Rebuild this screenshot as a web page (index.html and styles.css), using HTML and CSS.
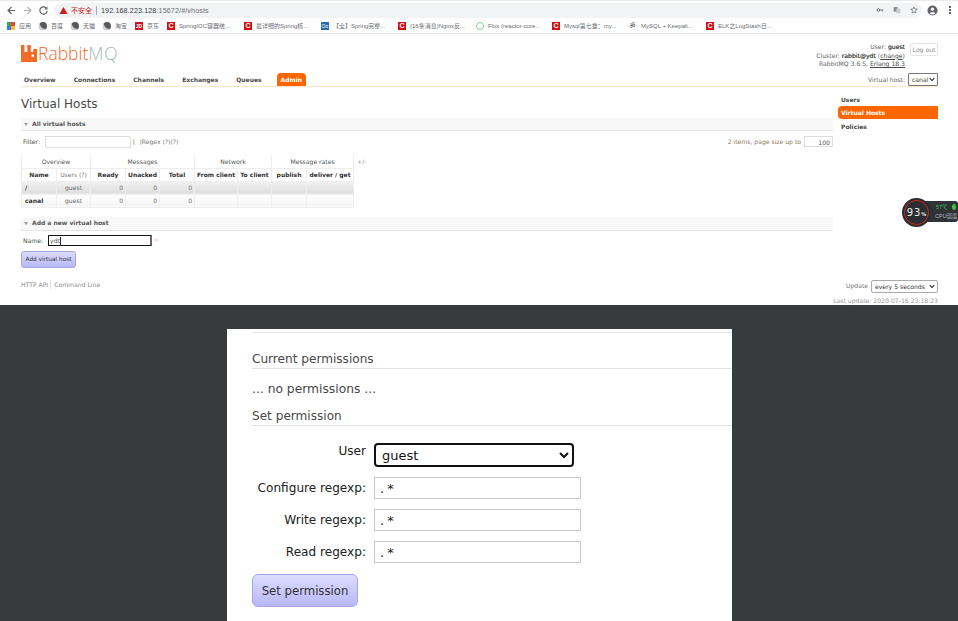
FILE: index.html
```html
<!DOCTYPE html>
<html lang="zh-CN">
<head>
  <meta charset="UTF-8">
  <meta name="viewport" content="width=device-width, initial-scale=1.0">
  <title>RabbitMQ Management</title>
  <link rel="stylesheet" href="styles.css">
</head>
<body>
  <div class="shot-top">
    <div class="toolbar">
      <svg class="tool-ico" viewBox="0 0 12 12"><path d="M10 6H2.5M6 2.2 2.2 6 6 9.8" fill="none" stroke="#5f6368" stroke-width="1.3"/></svg>
      <svg class="tool-ico" viewBox="0 0 12 12"><path d="M2 6h7.5M6 2.2 9.8 6 6 9.8" fill="none" stroke="#b4b7ba" stroke-width="1.3"/></svg>
      <svg class="tool-ico" viewBox="0 0 12 12"><path d="M9.6 4.2A4 4 0 1 0 10 6.5" fill="none" stroke="#5f6368" stroke-width="1.3"/><path d="M10.3 1.6v3.4H6.9z" fill="#5f6368"/></svg>
      <div class="omnibox">
        <svg class="warn-ico" viewBox="0 0 10 10"><path d="M5 1 9.5 9H.5z" fill="#c5221f"/></svg>
        <span class="not-secure">不安全</span>
        <span class="omni-sep"></span>
        <span class="url">192.168.223.128<span class="url-dim">:15672/#/vhosts</span></span>
        <span class="omni-right">
          <svg class="omni-ico" viewBox="0 0 12 12"><circle cx="3.5" cy="6" r="2" fill="none" stroke="#5f6368" stroke-width="1.3"/><path d="M5.5 6H11M9.5 6v2" stroke="#5f6368" stroke-width="1.3"/></svg>
          <svg class="omni-ico" viewBox="0 0 12 12"><rect x="1" y="1.5" width="6" height="7" fill="#8a8d91"/><rect x="5" y="4" width="6" height="7" fill="#c9cbce"/></svg>
          <svg class="omni-ico" viewBox="0 0 12 12"><path d="m6 1.3 1.4 3.2 3.5.3-2.7 2.3.8 3.4-3-1.8-3 1.8.8-3.4L1.1 4.8l3.5-.3z" fill="none" stroke="#5f6368"/></svg>
        </span>
      </div>
      <svg class="avatar" viewBox="0 0 12 12"><circle cx="6" cy="6" r="5.5" fill="#5f6368"/><circle cx="6" cy="4.6" r="1.8" fill="#fff"/><path d="M2.8 9c.8-1.5 5.6-1.5 6.4 0A4.4 4.4 0 0 1 2.8 9z" fill="#fff"/></svg>
      <span class="kebab"><i></i><i></i><i></i></span>
    </div>

    <div class="bookmarks">
      <span class="bm bm-short"><span class="ico ico-apps"></span>应用</span>
      <span class="bm bm-short"><span class="ico ico-globe"></span>百度</span>
      <span class="bm bm-short"><span class="ico ico-globe"></span>天猫</span>
      <span class="bm bm-short"><span class="ico ico-globe"></span>淘宝</span>
      <span class="bm bm-short"><span class="ico ico-jd">JD</span>京东</span>
      <span class="bm bm-long"><span class="ico ico-c">C</span>SpringIOC容器统...</span>
      <span class="bm bm-long"><span class="ico ico-c">C</span>最详细的Spring核...</span>
      <span class="bm bm-long"><span class="ico ico-o">O≡</span>【全】Spring完整...</span>
      <span class="bm bm-c3"><span class="ico ico-c">C</span>(16条消息)Nginx反...</span>
      <span class="bm bm-flux"><span class="ico ico-flux"></span>Flux (reactor-core...</span>
      <span class="bm bm-long"><span class="ico ico-c">C</span>Mysql第七章：my...</span>
      <span class="bm bm-long"><span class="ico ico-ks">ॐ</span>MySQL + Keepali...</span>
      <span class="bm"><span class="ico ico-c">C</span>ELK之LogStash日...</span>
    </div>

    <div class="rmq">
      <header class="rmq-head">
        <div class="logo">
          <svg class="logo-mark" viewBox="0 0 16 17"><path d="M0 0h3.5v7H6.3V0h3.5v7h2.4V4h3.8v13H0z" fill="#f26b28"/><rect x="10.6" y="9.5" width="2.4" height="2.6" fill="#fff"/></svg>
          <span class="logo-rabbit">Rabbit</span><span class="logo-mq">MQ</span><span class="logo-tm">.</span>
        </div>
        <div class="login">
          <div class="login-text">
            <p>User: <b>guest</b></p>
            <p>Cluster: <b>rabbit@ydt</b> (<u>change</u>)</p>
            <p>RabbitMQ 3.6.5, <u>Erlang 18.3</u></p>
          </div>
          <button class="logout">Log out</button>
        </div>
      </header>

      <nav class="tabs">
        <span class="tab">Overview</span>
        <span class="tab">Connections</span>
        <span class="tab">Channels</span>
        <span class="tab">Exchanges</span>
        <span class="tab">Queues</span>
        <span class="tab tab-on">Admin</span>
        <span class="vhost-pick">Virtual host:
          <span class="small-select vhost-select">canal<svg class="chev" viewBox="0 0 8 6"><path d="M1 1.2 4 4.4l3-3.2" fill="none" stroke="#222" stroke-width="1.4"/></svg></span>
        </span>
      </nav>

      <div class="rmq-body">
        <main class="rmq-main">
          <h1>Virtual Hosts</h1>

          <h2 class="section"><span class="arrow"></span>All virtual hosts</h2>
          <div class="filter-row">
            <label class="filter-label">Filter:</label>
            <span class="filter-box"></span>
            <span class="regex">[ &nbsp;]Regex (?)(?)</span>
            <span class="paging"><span class="paging-num">2 items, page size up to</span><span class="page-box">100</span></span>
          </div>

          <table class="vhosts">
            <colgroup>
              <col class="c-name"><col class="c-users"><col class="c-ready"><col class="c-unack"><col class="c-total">
              <col class="c-from"><col class="c-to"><col class="c-pub"><col class="c-del"><col class="c-plus">
            </colgroup>
            <thead>
              <tr class="group-row">
                <th colspan="2">Overview</th>
                <th colspan="3">Messages</th>
                <th colspan="2">Network</th>
                <th colspan="2">Message rates</th>
                <td class="plus">+/-</td>
              </tr>
              <tr class="col-row">
                <th>Name</th>
                <th class="lite">Users (?)</th>
                <th>Ready</th>
                <th>Unacked</th>
                <th>Total</th>
                <th>From client</th>
                <th>To client</th>
                <th>publish</th>
                <th>deliver / get</th>
              </tr>
            </thead>
            <tbody>
              <tr class="odd">
                <td class="name">/</td><td class="mid">guest</td><td class="num">0</td><td class="num">0</td><td class="num">0</td><td></td><td></td><td></td><td></td>
              </tr>
              <tr class="even">
                <td class="name">canal</td><td class="mid">guest</td><td class="num">0</td><td class="num">0</td><td class="num">0</td><td></td><td></td><td></td><td></td>
              </tr>
            </tbody>
          </table>

          <h2 class="section section-add"><span class="arrow"></span>Add a new virtual host</h2>
          <div class="name-row">
            <label class="filter-label">Name:</label>
            <span class="name-input">ydt<i class="caret"></i></span>
            <span class="req">*</span>
          </div>
          <button class="purple-btn add-btn">Add virtual host</button>

          <div class="foot-links"><span class="foot-api">HTTP API</span><span>Command Line</span></div>
        </main>

        <aside class="rmq-side">
          <a class="side-link">Users</a>
          <a class="side-link side-on">Virtual Hosts</a>
          <a class="side-link">Policies</a>
        </aside>
      </div>

      <div class="update-box">
        <div class="update-row">Update
          <span class="small-select update-select">every 5 seconds<svg class="chev" viewBox="0 0 8 6"><path d="M1 1.2 4 4.4l3-3.2" fill="none" stroke="#222" stroke-width="1.4"/></svg></span>
        </div>
        <div class="last-update">Last update: 2020-07-16 23:18:23</div>
      </div>

      <div class="cpu">
        <span class="cpu-tail"><span class="cpu-temp">57℃</span><span class="cpu-leaf"></span><span class="cpu-label">CPU温度</span></span>
        <span class="cpu-ring">93<small>%</small></span>
      </div>
    </div>
  </div>

  <div class="shot-bottom">
    <div class="panel">
      <div class="panel-rule"></div>
      <h3 class="perm-head">Current permissions</h3>
      <p class="perm-none">... no permissions ...</p>
      <h3 class="perm-head perm-set">Set permission</h3>
      <div class="perm-form">
        <label class="perm-label perm-user">User</label>
        <select class="user-select"><option>guest</option></select>
        <label class="perm-label">Configure regexp:</label>
        <span class="regex-input">.*</span>
        <label class="perm-label">Write regexp:</label>
        <span class="regex-input">.*</span>
        <label class="perm-label">Read regexp:</label>
        <span class="regex-input">.*</span>
      </div>
      <button class="purple-btn set-btn">Set permission</button>
    </div>
  </div>
</body>
</html>
```

FILE: styles.css
```css
* { box-sizing: border-box; }
html, body { margin: 0; padding: 0; }
body {
  width: 958px;
  height: 621px;
  overflow: hidden;
  font-family: "DejaVu Sans", Verdana, "Noto Sans CJK SC", sans-serif;
  color: #484848;
  background: #fff;
}
p, h1, h2, h3 { margin: 0; }

.shot-top { height: 305px; display: flex; flex-direction: column; }

/* browser chrome */
.toolbar {
  height: 18px;
  border-top: 1px solid #e9eaec;
  padding: 1px 0 0 6px;
  display: flex;
  align-items: center;
  flex: none;
}
.tool-ico { width: 11px; height: 11px; margin-right: 5px; flex: none; }
.omnibox {
  width: 868px;
  height: 15px;
  background: #f1f3f4;
  border-radius: 8px;
  display: flex;
  align-items: center;
  padding: 0 4px 0 5px;
  font-family: "Liberation Sans", sans-serif;
  font-size: 7.2px;
  flex: none;
}
.warn-ico { width: 9px; height: 9px; flex: none; }
.not-secure { color: #c5221f; margin-left: 3px; font-family: "Noto Sans CJK SC", sans-serif; font-size: 7px; }
.omni-sep { width: 1px; height: 9px; background: #a8abaf; margin: 0 4px; }
.url { color: #3c4043; letter-spacing: 0.1px; }
.url-dim { color: #6d7074; }
.omni-right { margin-left: auto; display: flex; gap: 9px; }
.omni-ico { width: 8px; height: 8px; }
.avatar { width: 11px; height: 11px; margin-left: 5px; flex: none; }
.kebab { display: flex; flex-direction: column; gap: 1px; margin-left: 11px; }
.kebab i { width: 2px; height: 2px; background: #5f6368; display: block; }

.bookmarks {
  height: 16px;
  display: flex;
  align-items: center;
  padding-left: 7px;
  border-bottom: 1px solid #dfe1e4;
  font-family: "Liberation Sans", "Noto Sans CJK SC", sans-serif;
  font-size: 6px;
  color: #6a6d71;
  white-space: nowrap;
  flex: none;
}
.bm { display: flex; align-items: center; }
.bm-short { width: 32px; }
.bm-long { width: 77px; }
.bm-c3 { width: 78px; }
.bm-flux { width: 76px; }
.ico { width: 8px; height: 8px; margin-right: 4px; flex: none; display: block; }
.ico-apps {
  background: conic-gradient(#e8453c 25%, #f9bb2d 0 50%, #3b78e7 0 75%, #34a853 0);
}
.ico-globe { background: #55585c; border-radius: 50%; box-shadow: inset 2px -2px 0 -1px #d8d8d8; }
.ico-jd { background: #c4161c; color: #fff; font-size: 5px; line-height: 8px; text-align: center; font-weight: bold; }
.ico-c { background: #d40f14; color: #fff; font-size: 7px; line-height: 8px; text-align: center; font-weight: bold; }
.ico-o { background: #2a6eb0; color: #fff; font-size: 5px; line-height: 8px; text-align: center; }
.ico-flux { border: 1px solid #8fcf8f; border-radius: 50%; }
.ico-ks { color: #333; font-size: 7px; line-height: 8px; font-family: "DejaVu Sans", sans-serif; }

/* rabbitmq page */
.rmq { position: relative; flex: 1; padding: 0 20px 0 21px; }
.rmq-head { height: 38px; display: flex; justify-content: space-between; }
.logo {
  display: flex;
  align-items: baseline;
  margin-top: 10px;
  height: 18px;
  line-height: 18px;
  font-family: "Open Sans", "Liberation Sans", sans-serif;
  font-weight: 300;
  font-size: 17.5px;
}
.logo-mark { width: 16px; height: 17px; align-self: center; margin-right: 1px; }
.logo-rabbit { color: #f26b28; }
.logo-mq { color: #a9b3b3; letter-spacing: 0.8px; }
.logo-tm { color: #ccd; font-size: 8px; }
.login { display: flex; font-size: 6.1px; color: #666; padding-top: 9px; }
.login-text { text-align: right; line-height: 8.7px; }
.login-text b { color: #484848; font-weight: normal; text-shadow: 0 0 .4px #484848; }
.login-text u { color: #484848; }
.logout {
  width: 28px;
  height: 13px;
  margin-left: 5px;
  padding: 0;
  background: #fff;
  border: 1px solid #e4e4e4;
  border-radius: 2px;
  color: #8d8d8d;
  font: 6.1px "DejaVu Sans", sans-serif;
}
.tabs {
  height: 15px;
  display: flex;
  align-items: center;
  border-bottom: 1px solid #fce4c4;
  font-size: 6px;
  font-weight: bold;
  color: #484848;
  padding: 1px 0 0 3px;
}
.tab { margin-right: 18px; }
.tab-on {
  margin-left: -3px;
  height: 13px;
  line-height: 14px;
  padding: 0 4px;
  background: #f60;
  color: #fff;
  border-radius: 4px 4px 0 0;
  align-self: flex-end;
}
.vhost-pick { margin-left: auto; font-weight: normal; font-size: 6.1px; color: #666; display: flex; align-items: center; gap: 3px; margin-bottom: 1px; }
.small-select {
  display: inline-flex;
  align-items: center;
  justify-content: space-between;
  height: 13px;
  padding: 0 2px 0 3px;
  font-size: 6.1px;
  color: #333;
  background: #fff;
  border: 1px solid #777;
  border-radius: 1px;
}
.chev { width: 6px; height: 5px; flex: none; }
.vhost-select { width: 30px; }

.rmq-body { display: flex; }
.rmq-main { width: 812px; flex: none; }
h1 { font-size: 12px; font-weight: normal; color: #484848; margin-top: 10px; line-height: 14px; }
.section {
  height: 13px;
  margin-top: 7px;
  background: #f8f8f8;
  border-bottom: 1px solid #e4e4e4;
  font-size: 6px;
  line-height: 12px;
  font-weight: bold;
  color: #555;
  display: flex;
  align-items: center;
  padding-left: 3px;
}
.arrow {
  width: 0;
  height: 0;
  border: 2.5px solid transparent;
  border-top: 3px solid #999;
  border-bottom: 0;
  margin-right: 4px;
}
.filter-row {
  display: flex;
  align-items: center;
  height: 14px;
  margin-top: 3px;
  font-size: 6.1px;
  color: #666;
}
.filter-label { color: #484848; margin: 0 5px 0 2px; }
.filter-box {
  width: 85px;
  height: 11px;
  border: 1px solid #ddd;
  border-width: 1px 0 0 1px;
  box-shadow: 1px 1px 0 #ddd;
}
.regex { margin-left: 3px; color: #777; }
.paging { margin-left: auto; display: flex; align-items: center; }
.paging-num { color: #8a7a60; }
.page-box {
  width: 29px;
  height: 11px;
  margin-left: 3px;
  line-height: 11px;
  text-align: right;
  padding-right: 2px;
  border: 1px solid #ddd;
  color: #555;
}
.vhosts {
  border-collapse: collapse;
  table-layout: fixed;
  width: 352px;
  margin-top: 7px;
  font-size: 6.1px;
}
.vhosts th, .vhosts td { padding: 0; height: 13px; line-height: 8px; border: 1px solid #eee; overflow: hidden; white-space: nowrap; }
.vhosts .plus { border: 0; color: #999; padding-left: 3px; }
.group-row th { height: 12px; padding-top: 1px; font-weight: normal; color: #555; border-top: 0; text-align: center; }
.col-row th { color: #333; font-weight: bold; font-size: 6px; text-align: center; }
.col-row .lite { font-weight: normal; color: #777; }
.c-name { width: 35px; } .c-users { width: 34px; } .c-ready { width: 35px; } .c-unack { width: 34px; }
.c-total { width: 35px; } .c-from { width: 43px; } .c-to { width: 34px; } .c-pub { width: 35px; } .c-del { width: 47px; } .c-plus { width: 20px; }
.odd td { background: linear-gradient(#f2f2f2, #dddddd); }
.even td { background: linear-gradient(#fff, #f4f4f4); }
.vhosts .name { font-weight: bold; color: #333; padding-left: 3px; }
.vhosts .mid { text-align: center; color: #666; }
.vhosts .num { text-align: right; padding-right: 2px; color: #777; }
.section-add { margin-top: 9px; height: 14px; }
.name-row { display: flex; align-items: center; height: 13px; margin-top: 3px; font-size: 6.1px; }
.name-row .filter-label { margin-right: 5px; }
.name-input {
  width: 104px;
  height: 11px;
  border: 1px solid #111;
  border-right: 2px solid #666;
  border-radius: 1px;
  line-height: 9px;
  padding-left: 1px;
  color: #555;
}
.caret { display: inline-block; width: 1px; height: 8px; background: #222; vertical-align: middle; }
.req { margin-left: 3px; color: #f9a8a8; }
.purple-btn {
  display: block;
  background: linear-gradient(#dcdcff, #b8b8f8);
  border: 1px solid #a5a5e6;
  color: #333;
  font-family: "DejaVu Sans", sans-serif;
  padding: 0;
}
.add-btn { width: 55px; height: 17px; margin-top: 4px; border-radius: 3px; font-size: 5.8px; }
.foot-links { margin-top: 12px; font-size: 6.1px; color: #888; display: flex; height: 9px; line-height: 9px; }
.foot-api { border-right: 1px solid #ddd; padding-right: 2px; margin-right: 3px; }

.rmq-side { width: 100px; margin-left: 5px; padding-top: 6px; font-size: 6px; font-weight: bold; color: #484848; }
.side-link { display: block; height: 13px; line-height: 13px; padding-left: 3px; }
.side-on { background: #f60; color: #fff; border-radius: 4px 0 0 4px; margin-bottom: 1px; }

.update-box {
  position: absolute;
  right: 20px;
  top: 245px;
  text-align: right;
  font-size: 6.1px;
  color: #777;
}
.update-select { width: 67px; border-color: #aaa; border-radius: 2px; margin-left: 1px; vertical-align: middle; }
.update-row { height: 13px; line-height: 13px; }
.last-update { margin-top: 5px; color: #999; }

.cpu { position: absolute; left: 901px; top: 163px; width: 57px; height: 30px; }
.cpu-ring {
  position: absolute;
  left: 1px;
  top: 1px;
  width: 29px;
  height: 29px;
  padding-top: 1px;
  border-radius: 50%;
  background: #2a2d32;
  border: 2px solid #2a2d32;
  outline: 1.5px solid #d0281c;
  outline-offset: -3.5px;
  color: #eee;
  font-size: 10px;
  letter-spacing: 1px;
  line-height: 23px;
  text-align: center;
}
.cpu-ring small { font-size: 5px; font-weight: bold; letter-spacing: 0; }
.cpu-tail {
  position: absolute;
  left: 20px;
  top: 4px;
  width: 37px;
  height: 21px;
  background: #2f3237;
  border-radius: 0 3px 3px 0;
  font-size: 5.5px;
  font-family: "Liberation Sans", "Noto Sans CJK SC", sans-serif;
}
.cpu-temp { position: absolute; left: 15px; top: 2px; color: #3cc23c; }
.cpu-leaf { position: absolute; right: 2px; top: 3px; width: 4px; height: 6px; background: #3cc23c; border-radius: 50%; }
.cpu-label { position: absolute; left: 14px; top: 11px; color: #b8bcc0; }

/* bottom screenshot */
.shot-bottom { height: 316px; background: #373b3e; padding: 24px 0 0 227px; }
.panel { width: 505px; height: 292px; background: #fff; padding: 3px 0 0 25px; color: #484848; }
.panel-rule { height: 1px; background: #e4e4e4; }
.perm-head {
  height: 36px;
  padding-top: 18px;
  border-bottom: 1px solid #e4e4e4;
  font-size: 12.1px;
  line-height: 17px;
  font-weight: normal;
  color: #484848;
}
.perm-none { font-size: 12.3px; margin-top: 12px; line-height: 17px; }
.perm-set { height: 28px; padding-top: 10px; margin-top: 0; }
.perm-form {
  display: grid;
  grid-template-columns: 114px auto;
  justify-content: start;
  row-gap: 10px;
  column-gap: 8px;
  margin-top: 17px;
  font-size: 12.1px;
}
.perm-label { text-align: right; color: #222; line-height: 22px; }
.perm-user { line-height: 14px; padding-top: 1px; }
.user-select {
  width: 200px;
  height: 24px;
  border: 2px solid #111;
  border-radius: 4px;
  background: #fff;
  color: #111;
  font: 13px "DejaVu Sans", sans-serif;
  padding-left: 2px;
}
.regex-input {
  width: 207px;
  height: 22px;
  border: 1px solid #c8c8c8;
  padding-left: 5px;
  font-size: 13px;
  line-height: 21px;
  letter-spacing: 3px;
  color: #222;
}
.set-btn {
  width: 106px;
  height: 33px;
  margin-top: 11px;
  border-radius: 6px;
  font-size: 11.7px;
}
```
